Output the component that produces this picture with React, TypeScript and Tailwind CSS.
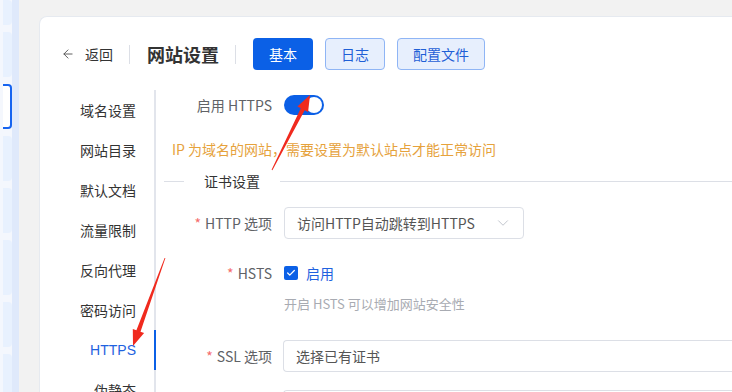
import { ChevronDown, Check, ArrowLeft } from 'lucide-react';

const menu = ['域名设置', '网站目录', '默认文档', '流量限制', '反向代理', '密码访问', 'HTTPS', '伪静态'];

// tiles of the page sidebar that peeks in on the left edge
const tiles = [25, 45, 45, 45, 45, 55, 45, 45];

function arrowPoints(tx: number, ty: number, px: number, py: number) {
  const dx = px - tx;
  const dy = py - ty;
  const len = Math.hypot(dx, dy);
  const ux = dx / len;
  const uy = dy / len;
  const nx = -uy;
  const ny = ux;
  const headLen = 16;
  const headW = 6;
  const shaftW = 2.2;
  const bx = px - ux * headLen;
  const by = py - uy * headLen;
  const pts = [
    [tx + nx * 0.4, ty + ny * 0.4],
    [bx + nx * shaftW, by + ny * shaftW],
    [bx + nx * headW, by + ny * headW],
    [px, py],
    [bx - nx * headW, by - ny * headW],
    [bx - nx * shaftW, by - ny * shaftW],
    [tx - nx * 0.4, ty - ny * 0.4],
  ];
  return pts.map((p) => p.map((v) => v.toFixed(1)).join(',')).join(' ');
}

function Label({ children }: { children: React.ReactNode }) {
  return (
    <div className="w-[120px] shrink-0 pr-3 text-right text-[14px] text-[#606266]">
      <span className="text-[#f56c6c] mr-1">*</span>
      {children}
    </div>
  );
}

export default function App() {
  return (
    <div className="relative flex h-[392px] w-[732px] overflow-hidden bg-[#f2f2f2] font-['Noto_Sans_CJK_SC',sans-serif] leading-none">
      {/* peeking sidebar */}
      <div className="flex w-[19px] shrink-0">
        <div className="flex w-[12px] flex-col gap-[7px] bg-[#f4f7fd] pl-[3px]">
          {tiles.map((h, i) =>
            i === 2 ? (
              <div key={i} className="shrink-0 rounded-r-[4px] border-2 border-l-0 border-[#1664f0] bg-white" style={{ height: h }} />
            ) : (
              <div key={i} className="shrink-0 rounded-r-[4px] bg-[#e8f1fe]" style={{ height: h }} />
            )
          )}
        </div>
        <div className="w-[7px] bg-[#dfe9fb]" />
      </div>

      <div className="flex-1 pl-[20px] pt-[16px]">
        <div className="h-full rounded-tl-[8px] border-l border-t border-[#e6eaf0] bg-white">
          {/* header */}
          <div className="flex h-[32px] items-center pl-[21px] mt-[21px]">
            <ArrowLeft className="h-[14px] w-[14px] text-[#555]" strokeWidth={1.6} />
            <span className="ml-[10px] text-[14px] text-[#333]">返回</span>
            <div className="ml-[16px] mr-[17px] h-[19px] w-px bg-[#dcdfe6]" />
            <span className="text-[18px] font-bold text-[#333]">网站设置</span>
            <div className="ml-[16px] mr-[17px] h-[19px] w-px bg-[#dcdfe6]" />
            <div className="flex gap-[12px]">
              <button className="h-[32px] rounded-[4px] bg-[#0b60e6] px-4 text-[14px] text-white">基本</button>
              <button className="h-[32px] rounded-[4px] border border-[#8fb5f5] bg-[#e7effd] px-[15px] text-[14px] text-[#1f5fd6]">日志</button>
              <button className="h-[32px] rounded-[4px] border border-[#8fb5f5] bg-[#e7effd] px-[15px] text-[14px] text-[#1f5fd6]">配置文件</button>
            </div>
          </div>

          {/* body */}
          <div className="mt-[20px] flex">
            <div className="w-[116px] shrink-0 border-r-2 border-[#e2e5ec]">
              {menu.map((m) => (
                <div key={m} className="relative flex h-[40px] items-center justify-end pr-[18px] text-[14px]">
                  <span className={m === 'HTTPS' ? 'text-[#1f62e0] font-[Liberation_Sans]' : 'text-[#333]'}>{m}</span>
                  {m === 'HTTPS' && <div className="absolute right-[-2px] top-0 h-[40px] w-[2px] bg-[#0b60e6]" />}
                </div>
              ))}
            </div>

            <div className="flex-1 pl-[8px]">
              <div className="flex h-[30px] items-center">
                <div className="w-[120px] shrink-0 pr-3 text-right text-[14px] text-[#606266]">启用 HTTPS</div>
                <div className="flex h-[20px] w-[40px] items-center justify-end rounded-full bg-[#0b5fe6] pr-[2px]">
                  <div className="h-[16px] w-[16px] rounded-full bg-white" />
                </div>
              </div>

              <div className="mt-[22px] pl-[8px] text-[14px] text-[#e6a23c]">IP 为域名的网站，需要设置为默认站点才能正常访问</div>

              <div className="mt-[18px] flex items-center">
                <div className="h-px w-[20px] bg-[#dcdfe6]" />
                <span className="px-5 text-[14px] text-[#333]">证书设置</span>
                <div className="h-px flex-1 bg-[#dcdfe6]" />
              </div>

              <div className="mt-[19px] flex items-center">
                <Label>HTTP 选项</Label>
                <div className="flex h-[32px] w-[240px] items-center justify-between rounded-[4px] border border-[#dcdfe6] pl-3 pr-[11px] text-[14px] text-[#555]">
                  <span>访问HTTP自动跳转到HTTPS</span>
                  <ChevronDown className="h-[18px] w-[18px] text-[#c0c4cc]" strokeWidth={1.3} />
                </div>
              </div>

              <div className="mt-[27px] flex items-center">
                <Label>HSTS</Label>
                <div className="flex h-[14px] w-[14px] items-center justify-center rounded-[2px] bg-[#0b60e6]">
                  <Check className="h-[10px] w-[10px] text-white" strokeWidth={3} />
                </div>
                <span className="ml-[8px] text-[14px] text-[#1f62e0]">启用</span>
              </div>

              <div className="mt-[17px] pl-[120px] text-[13px] text-[#a8abb2]">开启 HSTS 可以增加网站安全性</div>

              <div className="mt-[30px] flex items-center">
                <Label>SSL 选项</Label>
                <div className="-ml-px flex h-[32px] flex-1 items-center rounded-l-[4px] border border-r-0 border-[#dcdfe6] pl-3 text-[14px] text-[#555]">
                  选择已有证书
                </div>
              </div>

              <div className="mt-[18px] flex">
                <div className="w-[120px] shrink-0" />
                <div className="-ml-px h-[32px] flex-1 rounded-l-[4px] border border-r-0 border-[#dcdfe6]" />
              </div>
            </div>
          </div>
        </div>
      </div>

      {/* annotation arrows */}
      <svg className="pointer-events-none absolute left-0 top-0" width="732" height="392">
        <polygon points={arrowPoints(272, 170, 310, 95)} fill="#f02a1e" />
        <polygon points={arrowPoints(165, 258, 133, 346)} fill="#f02a1e" />
      </svg>
    </div>
  );
}
